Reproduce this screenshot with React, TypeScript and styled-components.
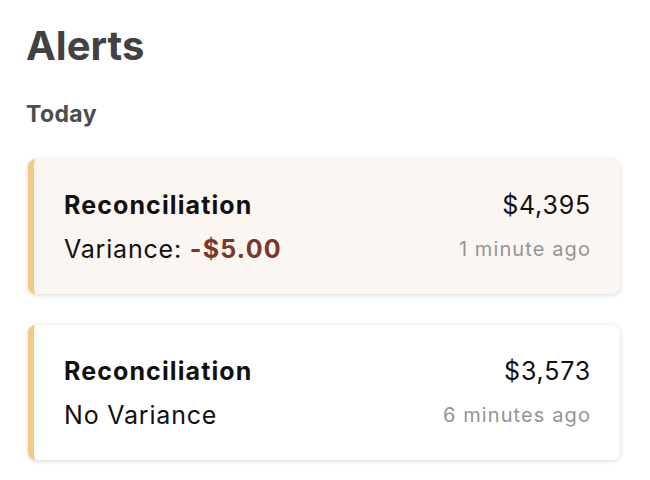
import styled, { createGlobalStyle } from "styled-components";

const GlobalStyle = createGlobalStyle`
  body {
    margin: 0;
    background: #ffffff;
    font-family: "Inter", "Noto Sans", sans-serif;
  }
`;

const Page = styled.div`
  padding: 22px 30px 20px 26px;
`;

const Title = styled.h1`
  margin: 0;
  font-size: 40px;
  line-height: 48px;
  font-weight: 700;
  color: #424242;
`;

const Section = styled.h2`
  margin: 30px 0 31px;
  font-size: 23px;
  line-height: 28px;
  font-weight: 700;
  letter-spacing: 0.4px;
  color: #4d4d4d;
`;

const List = styled.div`
  display: flex;
  flex-direction: column;
  gap: 31px;
  margin: 0 0 0 2px;
`;

const Card = styled.div<{ $unread?: boolean }>`
  display: flex;
  justify-content: space-between;
  padding: 31px 29px 30px 30px;
  background: ${(p) => (p.$unread ? "#fbf6f1" : "#ffffff")};
  border-left: 6px solid #f1ca89;
  border-radius: 8px;
  box-shadow: 0 1px 5px rgba(0, 0, 0, 0.16);
`;

const Column = styled.div<{ $right?: boolean }>`
  display: flex;
  flex-direction: column;
  gap: 14px;
  align-items: ${(p) => (p.$right ? "flex-end" : "flex-start")};
`;

const Line = styled.div<{ $bold?: boolean }>`
  font-size: 25px;
  line-height: 30px;
  letter-spacing: ${(p) => (p.$bold ? "1.1px" : "0.8px")};
  font-weight: ${(p) => (p.$bold ? 700 : 400)};
  color: #111111;
`;

const Amount = styled.span`
  font-weight: 700;
  letter-spacing: 1.2px;
  color: #7c3727;
`;

const Time = styled.div`
  font-size: 20px;
  line-height: 30px;
  letter-spacing: 1.1px;
  color: #959595;
`;

type Alert = {
  title: string;
  amount: string;
  time: string;
  variance?: string;
  unread?: boolean;
};

const alerts: Alert[] = [
  { title: "Reconciliation", amount: "$4,395", time: "1 minute ago", variance: "-$5.00", unread: true },
  { title: "Reconciliation", amount: "$3,573", time: "6 minutes ago" },
];

export default function App() {
  return (
    <>
      <GlobalStyle />
      <Page>
        <Title>Alerts</Title>
        <Section>Today</Section>
        <List>
          {alerts.map((a, i) => (
            <Card key={i} $unread={a.unread}>
              <Column>
                <Line $bold>{a.title}</Line>
                <Line>
                  {a.variance ? (
                    <>
                      Variance: <Amount>{a.variance}</Amount>
                    </>
                  ) : (
                    "No Variance"
                  )}
                </Line>
              </Column>
              <Column $right>
                <Line>{a.amount}</Line>
                <Time>{a.time}</Time>
              </Column>
            </Card>
          ))}
        </List>
      </Page>
    </>
  );
}
